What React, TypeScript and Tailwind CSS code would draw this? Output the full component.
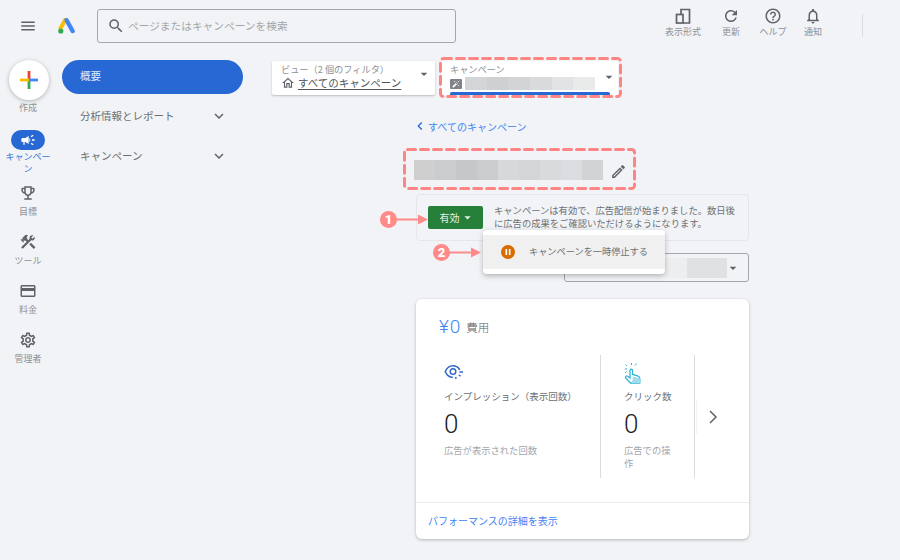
import {
  MdArrowDropDown,
  MdAutoFixHigh,
  MdCampaign,
  MdChevronLeft,
  MdConstruction,
  MdExpandMore,
  MdMenu,
  MdOutlineCreditCard,
  MdOutlineEdit,
  MdOutlineEmojiEvents,
  MdOutlineHelpOutline,
  MdOutlineHome,
  MdOutlineNotifications,
  MdOutlineSettings,
  MdPause,
  MdRefresh,
  MdSearch,
} from 'react-icons/md';

const nameBlocks = ['#cfcfd0', '#cbcccd', '#c6c7c8', '#cbcccd', '#d7d8da', '#d4d5d7', '#d9dadc', '#dcdde0', '#d2d3d5'];
const campaignBlocks = ['#d4d5d6', '#cfd0d1', '#d3d4d5', '#d9dadb', '#e2e3e4', '#e9eaea'];

function Logo() {
  return (
    <svg width="17" height="16" viewBox="0 0 17 16">
      <path d="M7 2.200 2.400 10.400" stroke="#fbbc04" strokeWidth="4" strokeLinecap="round" />
      <path d="M8.600 2.200 14.600 13" stroke="#4285f4" strokeWidth="4.400" strokeLinecap="round" />
      <circle cx="2.800" cy="13" r="2.600" fill="#34a853" />
    </svg>
  );
}

function PlusIcon() {
  return (
    <svg width="18" height="18" viewBox="0 0 18 18">
      <rect x="7.600" y="0" width="2.800" height="9" fill="#ea4335" />
      <rect x="7.600" y="9" width="2.800" height="9" fill="#34a853" />
      <rect x="0" y="7.600" width="9" height="2.800" fill="#fbbc04" />
      <rect x="9" y="7.600" width="9" height="2.800" fill="#4285f4" />
    </svg>
  );
}

function ViewIcon() {
  return (
    <svg width="16" height="16" viewBox="0 0 16 16" fill="none" stroke="#5f6368" strokeWidth="1.700">
      <rect x="1.500" y="6.500" width="6.500" height="8.500" />
      <path d="M6 6V1.500H14.500V15H8" />
    </svg>
  );
}

function EyeIcon() {
  return (
    <svg width="21" height="20" viewBox="0 0 21 20" fill="none" stroke="#2f67c7" strokeWidth="1.400">
      <path d="M15.500 5.200C13.800 2.900 11.500 1.800 9 1.800 5.600 1.800 2.900 4 1.200 7.600c1.700 3.600 4.400 5.800 7.800 5.800" />
      <circle cx="9" cy="7.600" r="2.800" />
      <path d="M14.600 4.800l1.400 1M15.400 8h3.600M14.800 11l1.800 1.200M11.600 13l.5 2" />
    </svg>
  );
}

function TouchIcon() {
  return (
    <svg width="18" height="22" viewBox="0 0 18 22" fill="none" stroke="#35b5d6" strokeWidth="1.300">
      <path d="M2.500 9.500 1 11M.8 7H3M1.500 2.500l1.500 1.500M7.500 1v2.200M12.500 1.500 11 3.500" strokeWidth="1" />
      <path d="M6 8.500c0-1.700 2.600-1.700 2.600 0v4l5 1.400c1.300.4 2.200 1.500 2.200 2.700v4.400H6.500L1.800 16c-1-1.100.6-2.700 1.800-1.700L6 16Z" />
      <path d="M8 21h8v-4.500l-7-2" fill="#9fdcec" stroke="none" />
    </svg>
  );
}

function Arrow({ label }: { label: string }) {
  return (
    <div className="flex items-center">
      <span className="flex h-[17px] w-[17px] items-center justify-center rounded-full bg-[#ff8a8a] font-['Roboto',sans-serif] text-[13px] font-black leading-none text-white">
        {label}
      </span>
      <svg width="32" height="11" viewBox="0 0 32 11" className="-ml-px">
        <path d="M0 5.500h24" stroke="#ff8a8a" strokeWidth="2" />
        <path d="M22 0.500 32 5.500l-10 5Z" fill="#ff8a8a" />
      </svg>
    </div>
  );
}

function DashedFrame({ width, height }: { width: number; height: number }) {
  return (
    <svg width={width} height={height} viewBox={`0 0 ${width} ${height}`} fill="none">
      <rect
        x="1.500"
        y="1.500"
        width={width - 3}
        height={height - 3}
        rx="3"
        stroke="#ff8585"
        strokeWidth="3"
        strokeDasharray="8 5"
        strokeLinecap="round"
      />
    </svg>
  );
}

function RailItem({ icon, label }: { icon: React.ReactNode; label: string }) {
  return (
    <div className="flex h-[49px] flex-col items-center text-[#8d9296]">
      <div className="flex h-[22px] items-center text-[#5f6368]">{icon}</div>
      <span className="mt-[2px] text-[9px] leading-[12px]">{label}</span>
    </div>
  );
}

function TopAction({ icon, label, width }: { icon: React.ReactNode; label: string; width: string }) {
  return (
    <div className={`flex flex-col items-center ${width}`}>
      <div className="flex h-[20px] items-center text-[#5f6368]">{icon}</div>
      <span className="whitespace-nowrap text-[9px] leading-[12px] text-[#8d9296]">{label}</span>
    </div>
  );
}

function Metric({ icon, title, desc, width }: { icon: React.ReactNode; title: string; desc: string; width: string }) {
  return (
    <div className={`${width} flex flex-col`}>
      <div className="flex h-[22px] items-end">{icon}</div>
      <div className="mt-[5px] text-[9.500px] leading-[14px] text-[#6b7074]">{title}</div>
      <div className="mt-[5px] font-['Roboto',sans-serif] text-[26px] font-light leading-[32px] text-[#202124]">0</div>
      <div className="mt-[4px] text-[9.300px] leading-[12.500px] text-[#a2a7ac]">{desc}</div>
    </div>
  );
}

export default function App() {
  return (
    <div className="relative h-[560px] w-[900px] overflow-hidden bg-[#f1f3f6] font-['Noto_Sans_CJK_JP','Noto_Sans',sans-serif]">
      {/* top bar */}
      <header className="flex h-[50px] items-start">
        <MdMenu className="ml-[19px] mt-[17px] text-[#5f6368]" size={18} />
        <div className="ml-[21px] mt-[18px]">
          <Logo />
        </div>
        <div className="ml-[22px] mt-[9px] flex h-[34px] w-[359px] items-center rounded-[3px] border border-[#a4a7aa] pl-[9px]">
          <MdSearch className="text-[#5f6368]" size={18} />
          <span className="ml-[3px] text-[10.700px] text-[#a2a7ac]">ページまたはキャンペーンを検索</span>
        </div>
        <div className="ml-[208px] mt-[6px] flex gap-[15px]">
          <TopAction icon={<ViewIcon />} label="表示形式" width="w-[38px]" />
          <div className="ml-[2px]">
            <TopAction icon={<MdRefresh size={18} />} label="更新" width="w-[24px]" />
          </div>
          <TopAction icon={<MdOutlineHelpOutline size={18} />} label="ヘルプ" width="w-[30px]" />
          <TopAction icon={<MdOutlineNotifications size={18} />} label="通知" width="w-[20px]" />
        </div>
        <div className="ml-[39px] mt-[14px] h-[23px] w-px bg-[#dadce0]" />
      </header>

      <div className="flex">
        {/* icon rail */}
        <aside className="flex w-[56px] flex-col items-center pt-[10px]">
          <div className="ml-[1px] flex h-[40px] w-[40px] items-center justify-center rounded-full bg-white shadow-[0_1px_4px_rgba(60,64,67,0.35)]">
            <PlusIcon />
          </div>
          <span className="mt-[2px] text-[9px] leading-[12px] text-[#8d9296]">作成</span>
          <div className="mt-[16px] flex h-[20px] w-[34px] items-center justify-center rounded-full bg-[#2768d4] text-white">
            <MdCampaign size={16} />
          </div>
          <span className="mt-[1px] w-[48px] break-all text-center text-[9px] leading-[11.500px] text-[#3b78d8]">キャンペーン</span>
          <div className="mt-[8px] flex flex-col">
            <RailItem icon={<MdOutlineEmojiEvents size={18} />} label="目標" />
            <RailItem icon={<MdConstruction size={18} />} label="ツール" />
            <RailItem icon={<MdOutlineCreditCard size={18} />} label="料金" />
            <RailItem icon={<MdOutlineSettings size={18} />} label="管理者" />
          </div>
        </aside>

        {/* section nav */}
        <nav className="ml-[6px] mt-[10px] w-[181px] text-[10.500px] text-[#6b7074]">
          <div className="flex h-[34px] items-center rounded-full bg-[#2768d4] pb-[2px] pl-[18px] text-[#e3ecfa]">概要</div>
          <div className="mt-[8px] flex h-[30px] items-center justify-between pb-[2px] pl-[18px] pr-[15px]">
            分析情報とレポート
            <MdExpandMore className="text-[#5f6368]" size={18} />
          </div>
          <div className="mt-[10px] flex h-[30px] items-center justify-between pb-[2px] pl-[18px] pr-[15px]">
            キャンペーン
            <MdExpandMore className="text-[#5f6368]" size={18} />
          </div>
        </nav>

        {/* main column */}
        <main className="ml-[29px] pt-[11px]">
          <div className="flex items-start">
            <div className="flex h-[34px] w-[163px] rounded-[2px] bg-white pl-[9px] pt-[2px] shadow-[0_1px_2px_rgba(60,64,67,0.3)]">
              <div className="w-[136px]">
                <div className="whitespace-nowrap text-[9.200px] leading-[12px] text-[#8d9296]">ビュー（2 個のフィルタ）</div>
                <div className="flex items-center whitespace-nowrap text-[10.500px] leading-[15px] text-[#50555a]">
                  <MdOutlineHome className="mr-[3px] text-[#5f6368]" size={14} />
                  <span className="underline underline-offset-2">すべてのキャンペーン</span>
                </div>
              </div>
              <MdArrowDropDown className="-ml-[1px] mt-[3px] text-[#5f6368]" size={16} />
            </div>
            <div className="ml-[6px] flex h-[34px] w-[177px] flex-col rounded-[2px] bg-white pl-[9px] pt-[2px]">
              <div className="text-[9.200px] leading-[12px] text-[#8d9296]">キャンペーン</div>
              <div className="mt-[2px] flex items-center">
                <div className="flex h-[10px] w-[12px] items-center justify-center rounded-[1px] bg-[#7f8387] text-white">
                  <MdAutoFixHigh size={8} />
                </div>
                <div className="ml-[3px] flex h-[13px] w-[130px]">
                  {campaignBlocks.map((color, i) => (
                    <div key={i} className="flex-1" style={{ backgroundColor: color }} />
                  ))}
                </div>
                <MdArrowDropDown className="ml-[6px] -mt-[14px] text-[#5f6368]" size={16} />
              </div>
              <div className="mt-[2px] h-[3px] w-[160px] rounded-t-[2px] bg-[#2768d4]" />
            </div>
          </div>

          <div className="ml-[144px] w-[333px]">
            <div className="mt-[24px] flex h-[14px] items-center text-[10px] text-[#4285f4]">
              <MdChevronLeft className="-ml-[4px] text-[#2768d4]" size={16} />
              <span>すべてのキャンペーン</span>
            </div>
            <div className="mt-[27px] flex h-[20px] items-center">
              <div className="-ml-[2px] flex h-[20px] w-[189px]">
                {nameBlocks.map((color, i) => (
                  <div key={i} className="flex-1" style={{ backgroundColor: color }} />
                ))}
              </div>
              <MdOutlineEdit className="ml-[7px] mt-[2px] text-[#5f6368]" size={17} />
            </div>

            {/* status */}
            <div className="mt-[14px] flex h-[47px] rounded-[4px] border border-[#e4e6e9] pl-[11px] pt-[11px]">
              <div className="flex h-[23px] w-[55px] items-center justify-center rounded-[2px] bg-[#26803a] pl-[3px] text-[10px] text-[#e6f0e8]">
                有効
                <MdArrowDropDown size={15} />
              </div>
              <p className="ml-[11px] -mt-[2px] w-[250px] text-[9.300px] leading-[13px] text-[#6b7074]">
                キャンペーンは有効で、広告配信が始まりました。数日後に広告の成果をご確認いただけるようになります。
              </p>
            </div>

            {/* select hidden behind the menu */}
            <div className="ml-[148px] mt-[12px] flex h-[29px] w-[185px] items-center justify-end rounded-[3px] border border-[#a4a7aa] pr-[7px]">
              <div className="h-[20px] w-[22px] bg-[#eceef0]" />
              <div className="h-[20px] w-[40px] bg-[#dfe1e3]" />
              <MdArrowDropDown className="-ml-[2px] text-[#5f6368]" size={16} />
            </div>

            {/* summary card */}
            <section className="mt-[17px] h-[240px] rounded-[6px] bg-white shadow-[0_1px_3px_rgba(60,64,67,0.35)]">
              <div className="h-[203px] pl-[23px] pt-[17px]">
                <div className="flex h-[22px] items-center">
                  <span className="font-['Roboto',sans-serif] text-[19px] font-light tracking-[1px] text-[#4285f4]">¥0</span>
                  <span className="ml-[5px] mt-[1px] text-[11.500px] font-light text-[#5f6368]">費用</span>
                </div>
                <div className="mt-[17px] flex h-[123px]">
                  <div className="w-[162px] border-r border-[#dadce0] pl-[5px] pt-[7px]">
                    <Metric icon={<EyeIcon />} title="インプレッション（表示回数）" desc="広告が表示された回数" width="w-[150px]" />
                  </div>
                  <div className="w-[94px] border-r border-[#dadce0] pl-[23px] pt-[7px]">
                    <Metric icon={<TouchIcon />} title="クリック数" desc="広告での操作" width="w-[50px]" />
                  </div>
                  <div className="ml-[1px] mt-[44px] flex h-[35px] w-[40px] items-center border-l border-[#f1f3f4] pl-[10px]">
                    <svg width="12" height="16" viewBox="0 0 12 16" fill="none" stroke="#5f6368" strokeWidth="1.500">
                      <path d="M3 2l6 6-6 6" />
                    </svg>
                  </div>
                </div>
              </div>
              <div className="flex h-[37px] items-center border-t border-[#e8eaed] pb-[2px] pl-[12px] text-[10px] text-[#4285f4]">
                パフォーマンスの詳細を表示
              </div>
            </section>
          </div>
        </main>
      </div>

      {/* menu opened from the status button */}
      <div className="absolute left-[483px] top-[230px] flex h-[44px] w-[182px] items-center rounded-[4px] bg-white shadow-[0_2px_5px_rgba(60,64,67,0.35)]">
        <div className="flex h-[34px] w-full items-center bg-[#f0f0f0] pl-[18px]">
          <span className="flex h-[14px] w-[14px] items-center justify-center rounded-full bg-[#d96c00] text-white">
            <MdPause size={10} />
          </span>
          <span className="ml-[14px] text-[9.200px] text-[#6b7074]">キャンペーンを一時停止する</span>
        </div>
      </div>

      {/* tutorial annotations */}
      <div className="pointer-events-none absolute left-[439px] top-[57px]">
        <DashedFrame width={183} height={41} />
      </div>
      <div className="pointer-events-none absolute left-[403px] top-[148px]">
        <DashedFrame width={233} height={42} />
      </div>
      <div className="absolute left-[380px] top-[211px]">
        <Arrow label="1" />
      </div>
      <div className="absolute left-[433px] top-[244px]">
        <Arrow label="2" />
      </div>
    </div>
  );
}
